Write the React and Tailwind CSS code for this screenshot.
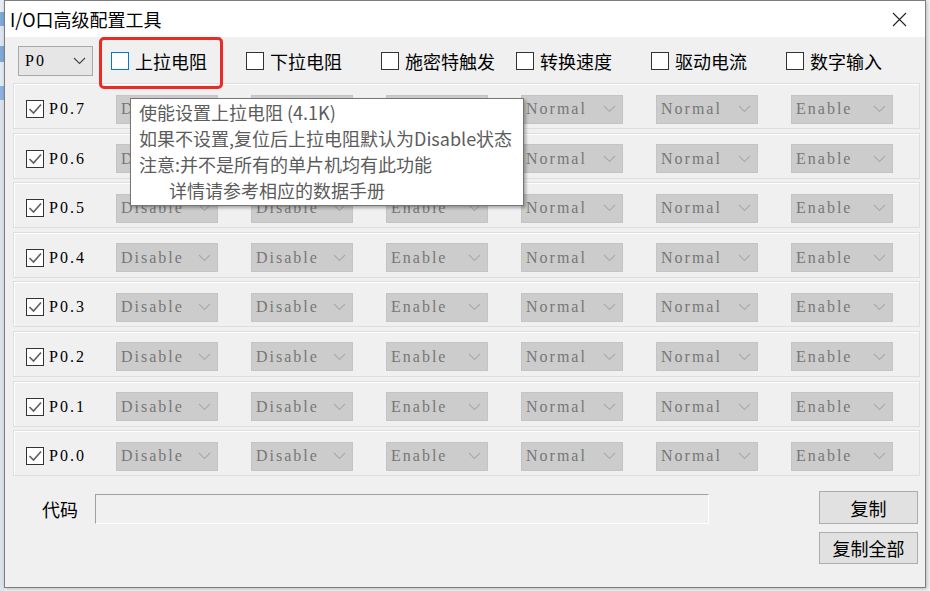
import React from 'react';

const rows = ['P0.7', 'P0.6', 'P0.5', 'P0.4', 'P0.3', 'P0.2', 'P0.1', 'P0.0'];
const cols = ['Disable', 'Disable', 'Enable', 'Normal', 'Normal', 'Enable'];
const options = ['上拉电阻', '下拉电阻', '施密特触发', '转换速度', '驱动电流', '数字输入'];

const cjk = { fontFamily: '"Noto Sans CJK SC", "Noto Sans", sans-serif' };
// bitmap-ish serif look of the original control font
const serif = { fontFamily: '"Liberation Serif", "Noto Sans CJK SC", serif' };

const Chevron = ({ className }) => (
  <svg width="13" height="8" viewBox="0 0 13 8" className={className}>
    <polyline points="1,1 6.5,6.5 12,1" fill="none" stroke="currentColor" strokeWidth="1.1" />
  </svg>
);

const CheckBox = ({ checked, active }) => (
  <div
    className={`w-[18px] h-[18px] border bg-white flex items-center justify-center shrink-0 ${
      active ? 'border-[#0078d7]' : 'border-[#333333]'
    }`}
  >
    {checked && (
      <svg width="16" height="16" viewBox="0 0 16 16">
        <polyline points="2.5,8 6.5,12 14,3.5" fill="none" stroke="#5f5f5f" strokeWidth="1.6" />
      </svg>
    )}
  </div>
);

const Select = ({ value }) => (
  <div
    className="w-[102px] h-[29px] bg-[#cccccc] border border-[#c4c4c4] flex items-center justify-between pl-[4px] pr-[6px] text-[16px] tracking-[2px] text-[#777777]"
    style={serif}
  >
    <span>{value}</span>
    <Chevron className="text-[#ababab]" />
  </div>
);

export default function App() {
  return (
    <div className="relative w-[930px] h-[591px] bg-[#f4f4f4] flex overflow-hidden">
      {/* sliver of the window behind */}
      <div className="w-[4px] h-full flex flex-col shrink-0">
        <div className="h-[12px] bg-[#e6eef8]" />
        <div className="h-[14px] bg-[#7fa9d9]" />
        <div className="h-[20px] bg-[#dde7f3]" />
        <div className="h-[16px] bg-[#7fa9d9]" />
        <div className="h-[24px] bg-[#e3ebf5]" />
        <div className="h-[14px] bg-[#8db3de]" />
        <div className="flex-1 bg-[#dfe5ec]" />
      </div>

      <div className="w-[922px] h-[588px] shrink-0 border border-[#7d7d7d] bg-[#f0f0f0] flex flex-col shadow-[1px_1px_4px_rgba(0,0,0,0.25)]">
        {/* title bar */}
        <div className="h-[36px] bg-white flex items-center justify-between pl-[5px] pr-[18px] shrink-0">
          <span className="text-[18px] text-black" style={cjk}>I/O口高级配置工具</span>
          <svg width="15" height="15" viewBox="0 0 15 15">
            <path d="M1 1 L14 14 M14 1 L1 14" stroke="#222" strokeWidth="1.1" />
          </svg>
        </div>

        {/* option header */}
        <div className="h-[46px] flex items-center pl-[13px] pt-[2px] shrink-0">
          <div
            className="w-[75px] h-[30px] bg-[#e6e6e6] border border-[#a8a8a8] flex items-center justify-between pl-[6px] pr-[6px] text-[16px] tracking-[2px] text-black"
            style={serif}
          >
            <span>P0</span>
            <Chevron className="text-[#444444]" />
          </div>
          <div className="flex ml-[18px]">
            {options.map((o, i) => (
              <div key={o} className="w-[135px] shrink-0 flex items-center gap-[6px]">
                <CheckBox active={i === 0} />
                <span className="text-[18px] leading-none text-black" style={cjk}>{o}</span>
              </div>
            ))}
          </div>
        </div>

        {/* pin rows */}
        <div className="flex flex-col gap-[3.6px] ml-[8px] mr-[5px]">
          {rows.map((r) => (
            <div
              key={r}
              className="h-[46px] border border-[#dedede] shadow-[inset_1px_1px_0_#ffffff] flex items-center pt-[6px]"
            >
              <div className="w-[102px] shrink-0 flex items-center gap-[5px] pl-[12px]">
                <CheckBox checked />
                <span className="text-[16px] tracking-[2px] text-black" style={serif}>{r}</span>
              </div>
              {cols.map((c, i) => (
                <div key={i} className="w-[135px] shrink-0">
                  <Select value={c} />
                </div>
              ))}
            </div>
          ))}
        </div>

        {/* code output */}
        <div className="flex items-start mt-[15px] pl-[37px] pr-[7px]">
          <div className="flex items-center mt-[3px]">
            <span className="text-[18px] text-black w-[36px]" style={cjk}>代码</span>
            <div className="ml-[17px] w-[614px] h-[30px] bg-[#f0f0f0] border border-t-[#a0a0a0] border-l-[#a0a0a0] border-b-white border-r-white" />
          </div>
          <div className="ml-auto flex flex-col gap-[8px]">
            <button className="w-[99px] h-[33px] bg-[#e1e1e1] border border-[#adadad] text-[18px] text-black leading-none" style={cjk}>
              复制
            </button>
            <button className="w-[99px] h-[32px] bg-[#e1e1e1] border border-[#adadad] text-[18px] text-black leading-none" style={cjk}>
              复制全部
            </button>
          </div>
        </div>
      </div>

      {/* annotation around the first option */}
      <div className="absolute left-[99px] top-[37px] w-[124px] h-[52px] border-[3px] border-[#ec2a25] rounded-[5px]" />

      {/* tooltip */}
      <div
        className="absolute left-[130px] top-[98px] w-[394px] h-[108px] bg-white border border-[#767676] shadow-[2px_2px_3px_rgba(0,0,0,0.3)] pl-[8px] text-[18px] leading-[26px] text-[#5c5c5c]"
        style={cjk}
      >
        <div>使能设置上拉电阻 (4.1K)</div>
        <div>如果不设置,复位后上拉电阻默认为Disable状态</div>
        <div>注意:并不是所有的单片机均有此功能</div>
        <div className="pl-[30px]">详情请参考相应的数据手册</div>
      </div>
    </div>
  );
}
